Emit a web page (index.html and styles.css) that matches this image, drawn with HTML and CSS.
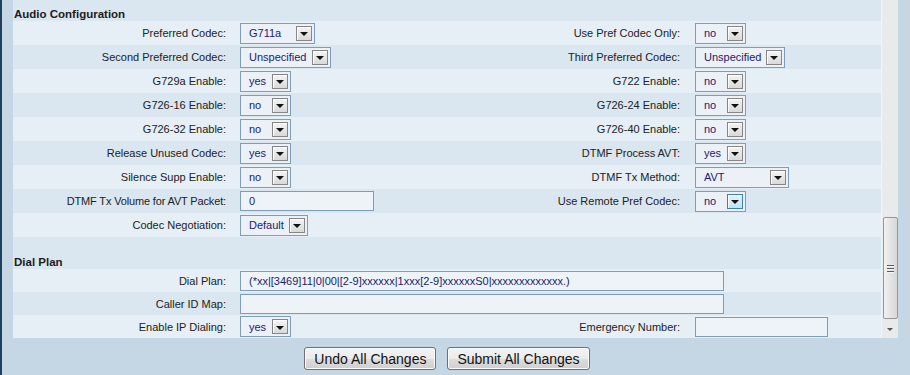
FILE: index.html
```html
<!DOCTYPE html>
<html>
<head>
<meta charset="utf-8">
<title>Audio Configuration</title>
<link rel="stylesheet" href="styles.css">
</head>
<body>
<div class="page">
  <div class="frame">
    <div class="panel">
      <div class="content">
        <div class="head first">Audio Configuration</div>

        <div class="row light">
          <span class="lbl">Preferred Codec:</span>
          <span class="fld"><span class="sel w75"><span class="val">G711a</span><span class="btn"><i></i></span></span></span>
          <span class="lbl r">Use Pref Codec Only:</span>
          <span class="fld r"><span class="sel w51"><span class="val">no</span><span class="btn"><i></i></span></span></span>
        </div>
        <div class="row dark">
          <span class="lbl">Second Preferred Codec:</span>
          <span class="fld"><span class="sel w91"><span class="val">Unspecified</span><span class="btn"><i></i></span></span></span>
          <span class="lbl r">Third Preferred Codec:</span>
          <span class="fld r"><span class="sel w90"><span class="val">Unspecified</span><span class="btn"><i></i></span></span></span>
        </div>
        <div class="row light">
          <span class="lbl">G729a Enable:</span>
          <span class="fld"><span class="sel w51"><span class="val">yes</span><span class="btn"><i></i></span></span></span>
          <span class="lbl r">G722 Enable:</span>
          <span class="fld r"><span class="sel w51"><span class="val">no</span><span class="btn"><i></i></span></span></span>
        </div>
        <div class="row dark">
          <span class="lbl">G726-16 Enable:</span>
          <span class="fld"><span class="sel w51"><span class="val">no</span><span class="btn"><i></i></span></span></span>
          <span class="lbl r">G726-24 Enable:</span>
          <span class="fld r"><span class="sel w51"><span class="val">no</span><span class="btn"><i></i></span></span></span>
        </div>
        <div class="row light">
          <span class="lbl">G726-32 Enable:</span>
          <span class="fld"><span class="sel w51"><span class="val">no</span><span class="btn"><i></i></span></span></span>
          <span class="lbl r">G726-40 Enable:</span>
          <span class="fld r"><span class="sel w51"><span class="val">no</span><span class="btn"><i></i></span></span></span>
        </div>
        <div class="row dark">
          <span class="lbl">Release Unused Codec:</span>
          <span class="fld"><span class="sel w51"><span class="val">yes</span><span class="btn"><i></i></span></span></span>
          <span class="lbl r">DTMF Process AVT:</span>
          <span class="fld r"><span class="sel w51"><span class="val">yes</span><span class="btn"><i></i></span></span></span>
        </div>
        <div class="row light">
          <span class="lbl">Silence Supp Enable:</span>
          <span class="fld"><span class="sel w51"><span class="val">no</span><span class="btn"><i></i></span></span></span>
          <span class="lbl r">DTMF Tx Method:</span>
          <span class="fld r"><span class="sel w94"><span class="val">AVT</span><span class="btn"><i></i></span></span></span>
        </div>
        <div class="row dark">
          <span class="lbl tight">DTMF Tx Volume for AVT Packet:</span>
          <span class="fld"><input class="inp w134" type="text" value="0"></span>
          <span class="lbl r">Use Remote Pref Codec:</span>
          <span class="fld r"><span class="sel w51"><span class="val">no</span><span class="btn hot"><i></i></span></span></span>
        </div>
        <div class="row light">
          <span class="lbl">Codec Negotiation:</span>
          <span class="fld"><span class="sel w68"><span class="val">Default</span><span class="btn"><i></i></span></span></span>
          <span class="lbl r"></span>
          <span class="fld r"></span>
        </div>

        <div class="head second">Dial Plan</div>

        <div class="row short light">
          <span class="lbl">Dial Plan:</span>
          <span class="fld wide"><input class="inp w484" type="text" value="(*xx|[3469]11|0|00|[2-9]xxxxxx|1xxx[2-9]xxxxxxS0|xxxxxxxxxxxxx.)"></span>
        </div>
        <div class="row short dark">
          <span class="lbl">Caller ID Map:</span>
          <span class="fld wide"><input class="inp w484" type="text" value=""></span>
        </div>
        <div class="row short light">
          <span class="lbl">Enable IP Dialing:</span>
          <span class="fld"><span class="sel w51"><span class="val">yes</span><span class="btn"><i></i></span></span></span>
          <span class="lbl r">Emergency Number:</span>
          <span class="fld r"><input class="inp w133" type="text" value=""></span>
        </div>
      </div>
      <div class="scrollbar">
        <div class="thumb">
          <span class="grip"></span><span class="grip"></span><span class="grip"></span>
        </div>
        <div class="arrow"></div>
      </div>
    </div>
    <div class="actions">
      <button class="action" type="button">Undo All Changes</button>
      <button class="action" type="button">Submit All Changes</button>
    </div>
  </div>
</div>
</body>
</html>
```

FILE: styles.css
```css
html, body {
  margin: 0;
  padding: 0;
}
body {
  background: #c5d6e4;
  font-family: "Liberation Sans", Arial, sans-serif;
  font-size: 11px;
  color: #222222;
  width: 910px;
  height: 375px;
  overflow: hidden;
}
.page {
  border-left: 2px solid #21405f;
  padding-left: 11px;
  height: 375px;
  box-sizing: border-box;
}
.frame {
  width: 885px;
}
.panel {
  display: flex;
  height: 338px;
}
.content {
  width: 868px;
  background: #dae6f0;
}
.head {
  font-weight: bold;
  font-size: 11.5px;
  line-height: 14px;
  padding-left: 1px;
  display: flex;
  align-items: flex-end;
  background: #dae6f0;
  color: #1c1c1c;
  box-sizing: border-box;
}
.head.first {
  height: 21px;
}
.head.second {
  height: 32px;
}
.row {
  display: grid;
  grid-template-columns: 219px 228px 227px 1fr;
  align-items: center;
  height: 24px;
}
.row.short {
  height: 23px;
}
.row.light {
  background: #e6eef6;
}
.row.dark {
  background: #dae6f0;
}
.lbl {
  text-align: right;
  padding-right: 6px;
  white-space: nowrap;
}
.lbl.tight {
  letter-spacing: -0.15px;
}
.lbl.r {
  padding-right: 7px;
}
.fld {
  padding-left: 8px;
  display: flex;
  align-items: center;
}
.fld.wide {
  grid-column: 2 / span 3;
}
.sel {
  display: inline-flex;
  align-items: center;
  justify-content: space-between;
  box-sizing: border-box;
  height: 21px;
  border: 1px solid #7f9db9;
  background: #ebf1f7;
  padding: 0 2px 0 8px;
  color: #1b1b74;
}
.val {
  white-space: nowrap;
}
.btn {
  width: 16px;
  height: 15px;
  box-sizing: border-box;
  border: 1px solid #868686;
  box-shadow: inset 1px 1px 0 #ffffff;
  background: linear-gradient(#f4f4f4, #d9d9d9);
  display: flex;
  justify-content: center;
  align-items: center;
}
.btn.hot {
  border-color: #3c7fb1;
  background: linear-gradient(#e3f3fc, #bfe2f5);
}
.btn i {
  display: block;
  width: 0;
  height: 0;
  margin-top: 2px;
  border-left: 4px solid transparent;
  border-right: 4px solid transparent;
  border-top: 4px solid #111111;
}
.w51 { width: 51px; }
.w68 { width: 68px; }
.w75 { width: 75px; }
.w90 { width: 90px; }
.w91 { width: 91px; }
.w94 { width: 94px; }
.inp {
  box-sizing: border-box;
  height: 20px;
  margin: 0;
  border: 1px solid #7f9db9;
  background: #eef3f7;
  padding: 0 0 0 8px;
  font-family: "Liberation Sans", Arial, sans-serif;
  font-size: 11px;
  color: #1b1b74;
  outline: none;
}
.w134 { width: 134px; }
.w133 { width: 133px; }
.w484 { width: 484px; }
.scrollbar {
  width: 17px;
  box-sizing: border-box;
  background: #e8eaec;
  border-left: 1px solid #f3f4f5;
  display: flex;
  flex-direction: column;
  align-items: center;
}
.thumb {
  margin-top: 217px;
  width: 15px;
  height: 102px;
  box-sizing: border-box;
  border: 1px solid #979797;
  border-radius: 2px;
  background: linear-gradient(90deg, #f1f1f1, #d7d7d7);
  display: flex;
  flex-direction: column;
  justify-content: center;
  align-items: center;
  gap: 2px;
}
.grip {
  display: block;
  width: 7px;
  height: 1px;
  background: #5a5a5a;
  box-shadow: 0 1px 0 #f4f4f4;
}
.arrow {
  margin-top: 9px;
  width: 0;
  height: 0;
  border-left: 3px solid transparent;
  border-right: 3px solid transparent;
  border-top: 3px solid #555555;
}
.actions {
  width: 868px;
  display: flex;
  justify-content: center;
  gap: 11px;
  padding-top: 9px;
}
.action {
  height: 23px;
  margin: 0;
  padding: 0 9px;
  border: 1px solid #707070;
  border-radius: 3px;
  background: linear-gradient(#f3f3f3 0%, #ebebeb 50%, #dddddd 51%, #cfcfcf 100%);
  box-shadow: inset 0 0 0 1px #fbfbfb;
  font-family: "Liberation Sans", Arial, sans-serif;
  font-size: 14px;
  color: #111111;
}
```
